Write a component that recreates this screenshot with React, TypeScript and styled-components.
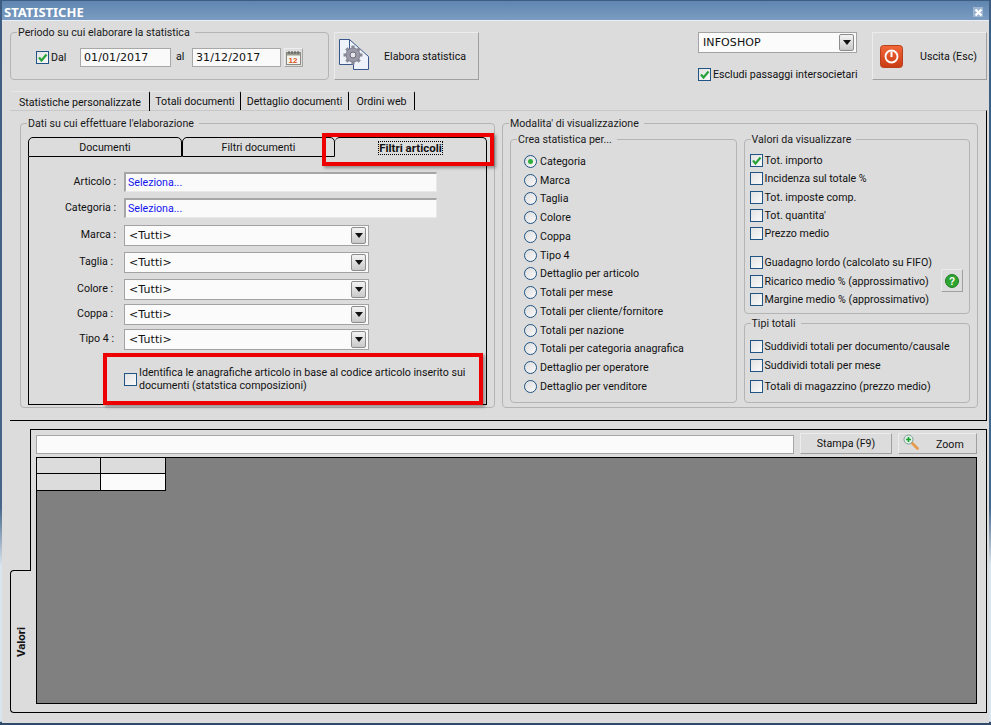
import React from 'react';
import styled, { createGlobalStyle } from 'styled-components';

const uiSize = '10.65px';

const Global = createGlobalStyle`
  html, body { margin: 0; padding: 0; background: #dcdcdc; }
  * { box-sizing: border-box; }
  body { font-family: Roboto, "Liberation Sans", sans-serif; font-size: ${uiSize}; color: #111; }
`;

const Frame = styled.div`
  position: relative;
  width: 991px;
  height: 725px;
  overflow: hidden;
  display: flex;
  flex-direction: column;
  background: #dcdcdc;
  border-style: solid;
  border-width: 1px 2px 2px 2px;
  border-image: linear-gradient(#3d5c82 0, #456689 70%, #d8e4ee 78%, #d8e4ee 99.5%, #2f4a6b 99.6%) 2;
`;

const TitleBar = styled.div`
  height: 20px;
  flex: none;
  display: flex;
  align-items: center;
  justify-content: space-between;
  padding: 3px 6px 0 2px;
  background: linear-gradient(#5f86b0, #7b9cc2);
  border-bottom: 1px solid #e8eef4;
`;

const Title = styled.span`
  color: #fff;
  font-family: "Noto Sans", sans-serif;
  font-weight: 700;
  font-size: 13px;
`;

const CloseBox = styled.span`
  width: 10px;
  height: 10px;
  display: flex;
  align-items: center;
  justify-content: center;
  background: #9db5d1;
`;

const TopBar = styled.div`
  height: 70px;
  flex: none;
  display: flex;
  padding: 11px 2px 0 8px;
`;

const Group = styled.fieldset<{ $w?: number; $h?: number }>`
  margin: -6px 0 0 0;
  min-width: 0;
  padding: 0;
  border: 1px solid #b4b4b4;
  border-radius: 4px;
  ${p => (p.$w ? `width: ${p.$w}px;` : '')}
  ${p => (p.$h ? `height: ${p.$h}px;` : '')}
`;

const GroupTitle = styled.legend`
  margin-left: 6px;
  padding: 1px 5px 0 1px;
  line-height: 12px;
  color: #1a1a1a;
`;

const PeriodRow = styled.div`
  display: flex;
  align-items: center;
  padding: 9px 0 0 25px;
`;

const Check = styled.span`
  flex: none;
  width: 13px;
  height: 13px;
  display: inline-flex;
  align-items: center;
  justify-content: center;
  border: 1px solid #1f5484;
  background: linear-gradient(135deg, #e2e2e2, #fafafa);
`;

const DateInput = styled.div<{ $w: number }>`
  width: ${p => p.$w}px;
  height: 19px;
  padding-left: 3px;
  display: flex;
  align-items: center;
  background: #fafafa;
  border: 1px solid #a8a8a8;
  font-family: "DejaVu Sans", sans-serif;
  font-size: 11px;
  letter-spacing: 0.1px;
`;

const DalLabel = styled.span`
  width: 31px;
  padding-left: 2px;
`;

const AlLabel = styled.span`
  width: 21px;
  padding-left: 5px;
  margin-top: -2px;
`;

const CalendarBtn = styled.span`
  width: 19px;
  height: 19px;
  margin-left: 3px;
  display: flex;
  align-items: center;
  justify-content: center;
  background: #dedede;
  border: 1px solid;
  border-color: #eee #a5a5a5 #a5a5a5 #eee;
`;

const BigButton = styled.div<{ $w: number; $ml?: number }>`
  flex: none;
  width: ${p => p.$w}px;
  height: 48px;
  margin-left: ${p => p.$ml ?? 0}px;
  display: flex;
  align-items: center;
  background: #dcdcdc;
  border: 1px solid;
  border-color: #ececec #a0a0a0 #a0a0a0 #ececec;
  padding-left: 3px;
`;

const BigButtonText = styled.span<{ $ml: number }>`
  margin: 1px 0 0 ${p => p.$ml}px;
`;

const PowerWrap = styled.span`
  display: flex;
  margin-left: 4px;
`;

const TopRightCol = styled.div`
  width: 174px;
  display: flex;
  flex-direction: column;
  margin-left: auto;
  gap: 15px;
`;

const Combo = styled.div<{ $w: number }>`
  width: ${p => p.$w}px;
  height: 21px;
  flex: none;
  display: flex;
  align-items: center;
  justify-content: space-between;
  padding: 0 2px 0 4px;
  background: #fbfbfb;
  border: 1px solid #a3a3a3;
  font-family: "DejaVu Sans", sans-serif;
  font-size: 11px;
  letter-spacing: 0.1px;
`;

const ComboBtn = styled.span`
  width: 15px;
  height: 17px;
  display: flex;
  align-items: center;
  justify-content: center;
  border-radius: 2px;
  border: 1px solid #8c8c8c;
  background: linear-gradient(#f4f4f4, #c9c9c9);
`;

const CheckRow = styled.label<{ $mt?: number }>`
  display: flex;
  align-items: center;
  gap: 2px;
  height: 13px;
  ${p => (p.$mt ? `margin-top: ${p.$mt}px;` : '')}
  white-space: nowrap;
`;

const TabStrip = styled.div`
  height: 19px;
  flex: none;
  display: flex;
  align-items: stretch;
  padding-left: 9px;
`;

const Tab = styled.div<{ $w: number; $on?: boolean }>`
  width: ${p => p.$w}px;
  display: flex;
  align-items: center;
  justify-content: center;
  padding-top: 1px;
  border-right: 1px solid #000;
  border-top: 1px solid #e6e6e6;
  border-top-right-radius: 2px;
  ${p => (p.$on ? 'height: 20px; position: relative; z-index: 1;' : '')}
`;

const TabBody = styled.div`
  height: 311px;
  flex: none;
  display: flex;
  gap: 7px;
  margin: 0 2px 0 8px;
  padding: 12px 8px 0 10px;
  border-top: 1px solid #c8c8c8;
  border-right: 1px solid #000;
  border-bottom: 1px solid #000;
`;

const FilterTabs = styled.div`
  display: flex;
  height: 20px;
  margin: 7px 7px 0 7px;
`;

const FilterTab = styled.div<{ $w: number; $on?: boolean }>`
  width: ${p => p.$w}px;
  display: flex;
  align-items: center;
  justify-content: center;
  border: 1px solid #000;
  border-left-width: ${p => (p.$on ? 0 : 1)}px;
  border-bottom: ${p => (p.$on ? 'none' : '1px solid #000')};
  border-radius: 5px 5px 0 0;
  font-size: ${p => (p.$on ? '11.5px' : uiSize)};
  font-weight: ${p => (p.$on ? 700 : 400)};
  & > span { ${p => (p.$on ? 'outline: 1px dotted #000; line-height: 12px;' : '')} }
`;

const FilterBody = styled.div`
  height: 248px;
  margin: 0 7px;
  padding-top: 15px;
  border: 1px solid #000;
  border-top: none;
`;

const FieldRow = styled.div<{ $mb: number }>`
  display: flex;
  align-items: center;
  margin-bottom: ${p => p.$mb}px;
`;

const FieldLabel = styled.span<{ $pr?: number }>`
  width: 95px;
  padding-right: ${p => p.$pr ?? 8}px;
  text-align: right;
  margin-top: -2px;
`;

const PickInput = styled.div`
  width: 313px;
  height: 20px;
  padding-left: 2px;
  display: flex;
  align-items: center;
  background: #fafafa;
  border: 1px solid #e8e8e8;
  border-top: 2px solid #a6a6a6;
  border-left: 2px solid #a6a6a6;
  color: #1414ee;
`;

const IdentRow = styled.div`
  display: flex;
  align-items: center;
  gap: 2px;
  margin: 16px 0 0 95px;
`;

const IdentText = styled.span`
  width: 340px;
  line-height: 13px;
`;

const ModeCols = styled.div`
  display: flex;
  gap: 7px;
  padding: 9px 7px 0;
`;

const RadioList = styled.div`
  display: flex;
  flex-direction: column;
  padding: 6px 0 0 13px;
`;

const RadioRow = styled.div`
  display: flex;
  align-items: center;
  gap: 3px;
  height: 18.75px;
`;

const Radio = styled.span<{ $on?: boolean }>`
  flex: none;
  position: relative;
  width: 13px;
  height: 13px;
  border-radius: 50%;
  border: 1px solid #1f5484;
  background: linear-gradient(135deg, #dcdcdc, #fafafa);
  &::after {
    content: '';
    display: ${p => (p.$on ? 'block' : 'none')};
    position: absolute;
    left: 3px;
    top: 3px;
    width: 5px;
    height: 5px;
    border-radius: 50%;
    background: #2fae3c;
  }
`;

const RightCol = styled.div`
  width: 227px;
  display: flex;
  flex-direction: column;
  gap: 9px;
`;

const ChecksList = styled.div<{ $pt: number }>`
  padding: ${p => p.$pt}px 0 0 5px;
`;

const HelpRow = styled.div`
  position: relative;
`;

const HelpButton = styled.span`
  position: absolute;
  right: 6px;
  top: -6px;
  width: 22px;
  height: 23px;
  display: flex;
  align-items: center;
  justify-content: center;
  background: #dcdcdc;
  border: 1px solid;
  border-color: #ececec #a0a0a0 #a0a0a0 #ececec;
`;

const Lower = styled.div`
  flex: 1;
  display: flex;
  align-items: stretch;
  margin: 8px 2px 10px 8px;
`;

const SideTabSlot = styled.div`
  width: 21px;
  flex: none;
  display: flex;
  align-items: flex-end;
  margin-right: -1px;
`;

const SideTab = styled.div`
  position: relative;
  z-index: 1;
  width: 100%;
  height: 143px;
  display: flex;
  align-items: center;
  justify-content: center;
  background: #dcdcdc;
  border-top: 1px solid #000;
  border-left: 1px solid #000;
  border-bottom: 1px solid #000;
  border-top-left-radius: 4px;
  border-bottom-left-radius: 4px;
`;

const SideLabel = styled.span`
  transform: rotate(-90deg);
  font-weight: 700;
  font-size: 11.5px;
`;

const Panel = styled.div`
  flex: 1;
  display: flex;
  flex-direction: column;
  padding: 3px 9px 8px 5px;
  border: 1px solid #000;
  background: #dcdcdc;
`;

const PanelBar = styled.div`
  height: 24px;
  flex: none;
  display: flex;
  align-items: flex-start;
`;

const TitleField = styled.div`
  width: 758px;
  height: 19px;
  margin-top: 2px;
  background: #fbfbfb;
  border: 1px solid #a6a6a6;
`;

const SmallButton = styled.div<{ $w: number }>`
  width: ${p => p.$w}px;
  height: 21px;
  margin-left: 6px;
  display: flex;
  align-items: center;
  justify-content: center;
  background: #dcdcdc;
  border: 1px solid;
  border-color: #ececec #a0a0a0 #a0a0a0 #ececec;
`;

const ZoomButton = styled(SmallButton)`
  justify-content: flex-start;
  padding-left: 4px;
  & > svg { margin-top: -3px; }
`;

const ZoomText = styled.span`
  margin: 2px 0 0 17px;
`;

const Sheet = styled.div`
  flex: 1;
  background: #808080;
  border: 1px solid #000;
`;

const SheetGrid = styled.div`
  display: grid;
  grid-template-columns: 64px 64px;
  grid-template-rows: 16px 16px;
  width: 129px;
  border-right: 1px solid #000;
  border-bottom: 1px solid #000;
`;

const SheetCell = styled.div<{ $white?: boolean; $last?: boolean; $low?: boolean }>`
  background: ${p => (p.$white ? '#fbfbfb' : '#dcdcdc')};
  ${p => (p.$last ? '' : 'border-right: 1px solid #000;')}
  ${p => (p.$low ? '' : 'border-bottom: 1px solid #000;')}
`;

const RedBox = styled.div<{ $x: number; $y: number; $w: number; $h: number }>`
  position: absolute;
  left: ${p => p.$x}px;
  top: ${p => p.$y}px;
  width: ${p => p.$w}px;
  height: ${p => p.$h}px;
  border: 4px solid #ee0000;
  box-shadow: 2px 2px 3px rgba(0, 0, 0, 0.35);
`;

const Tick = () => (
  <svg width="11" height="11" viewBox="0 0 11 11">
    <path d="M2 5.5 L4.5 8.5 L9.5 2.5" fill="none" stroke="#27a33a" strokeWidth="2.2" />
  </svg>
);

const Arrow = () => (
  <svg width="8" height="5" viewBox="0 0 8 5">
    <path d="M0 0H8L4 5Z" fill="#111" />
  </svg>
);

const CalendarIcon = () => (
  <svg width="15" height="15" viewBox="0 0 15 15">
    <rect x="0.5" y="2.5" width="14" height="12" fill="#f6f6f0" stroke="#8a8a80" />
    <rect x="1" y="3" width="13" height="2.5" fill="#9a9a90" />
    <path d="M3 1V4M6 1V4M9 1V4M12 1V4" stroke="#555" />
    <text x="2.5" y="13" fontSize="8" fontWeight="700" fontFamily="Liberation Sans" fill="#e2561a">12</text>
  </svg>
);

const GearDocIcon = () => (
  <svg width="34" height="38" viewBox="0 0 34 38">
    <path d="M1.5 2.5H11.5L30.5 19.5V32.5H15.5V27.5H1.5Z" fill="#eef2f9" stroke="#39578c" />
    <path d="M11.5 2.5V12.5H22" fill="none" stroke="#39578c" />
    <g transform="translate(15 18)">
      <path d="M0-9.5V9.5M-9.5 0H9.5M-6.7-6.7L6.7 6.7M6.7-6.7L-6.7 6.7" stroke="#8b8b99" strokeWidth="3.2" />
      <circle r="7" fill="#9a9aa8" stroke="#80808e" />
      <circle r="3" fill="#e4e4ea" stroke="#6a6a78" />
    </g>
  </svg>
);

const PowerIcon = () => (
  <svg width="23" height="23" viewBox="0 0 23 23">
    <defs>
      <linearGradient id="pw" x1="0" y1="0" x2="0" y2="1">
        <stop offset="0" stopColor="#f2683a" />
        <stop offset="1" stopColor="#c93a12" />
      </linearGradient>
    </defs>
    <rect x="0.5" y="0.5" width="22" height="22" rx="3" fill="url(#pw)" stroke="#b8401c" />
    <circle cx="11.5" cy="11.5" r="6" fill="none" stroke="#fff" strokeWidth="1.8" />
    <path d="M11.5 6.5V12" stroke="#fff" strokeWidth="2" />
  </svg>
);

const HelpIcon = () => (
  <svg width="14" height="14" viewBox="0 0 14 14">
    <circle cx="7" cy="7" r="6.5" fill="#2fa52f" stroke="#1f7f24" />
    <text x="7" y="10.5" textAnchor="middle" fontSize="10" fontWeight="700" fontFamily="Liberation Sans" fill="#fff">?</text>
  </svg>
);

const ZoomIcon = () => (
  <svg width="16" height="16" viewBox="0 0 16 16">
    <path d="M9 9L14.5 14.5" stroke="#e89a4a" strokeWidth="2.6" strokeLinecap="round" />
    <circle cx="5.5" cy="5.5" r="4.5" fill="#dff0ea" stroke="#7ea08e" />
    <path d="M5.5 3V8M3 5.5H8" stroke="#17a02a" strokeWidth="1.6" />
  </svg>
);

const CloseIcon = () => (
  <svg width="9" height="9" viewBox="0 0 9 9">
    <path d="M1.5 1.5L7.5 7.5M7.5 1.5L1.5 7.5" stroke="#fff" strokeWidth="2.2" />
  </svg>
);

const Box = ({ on }: { on?: boolean }) => <Check>{on && <Tick />}</Check>;

const filterFields: [string, number, number][] = [
  ['Marca :', 6, 8],
  ['Taglia :', 6, 11],
  ['Colore :', 4, 11],
  ['Coppa :', 4, 11],
];

const radios = [
  'Categoria', 'Marca', 'Taglia', 'Colore', 'Coppa', 'Tipo 4', 'Dettaglio per articolo',
  'Totali per mese', 'Totali per cliente/fornitore', 'Totali per nazione',
  'Totali per categoria anagrafica', 'Dettaglio per operatore', 'Dettaglio per venditore',
];

const ComboBox = ({ text, w }: { text: string; w: number }) => (
  <Combo $w={w}>
    {text}
    <ComboBtn><Arrow /></ComboBtn>
  </Combo>
);

export default function App() {
  return (
    <Frame>
      <Global />
      <TitleBar>
        <Title>STATISTICHE</Title>
        <CloseBox><CloseIcon /></CloseBox>
      </TitleBar>

      <TopBar>
        <Group $w={319} $h={54}>
          <GroupTitle>Periodo su cui elaborare la statistica</GroupTitle>
          <PeriodRow>
            <Box on />
            <DalLabel>Dal</DalLabel>
            <DateInput $w={91}>01/01/2017</DateInput>
            <AlLabel>al</AlLabel>
            <DateInput $w={89}>31/12/2017</DateInput>
            <CalendarBtn><CalendarIcon /></CalendarBtn>
          </PeriodRow>
        </Group>
        <BigButton $w={145} $ml={5}>
          <GearDocIcon />
          <BigButtonText $ml={12}>Elabora statistica</BigButtonText>
        </BigButton>
        <TopRightCol>
          <ComboBox text="INFOSHOP" w={159} />
          <CheckRow><Box on />Escludi passaggi intersocietari</CheckRow>
        </TopRightCol>
        <BigButton $w={115}>
          <PowerWrap><PowerIcon /></PowerWrap>
          <BigButtonText $ml={17}>Uscita (Esc)</BigButtonText>
        </BigButton>
      </TopBar>

      <TabStrip>
        <Tab $w={139} $on>Statistiche personalizzate</Tab>
        <Tab $w={91}>Totali documenti</Tab>
        <Tab $w={108}>Dettaglio documenti</Tab>
        <Tab $w={66}>Ordini web</Tab>
      </TabStrip>

      <TabBody>
        <Group $w={475} $h={291}>
          <GroupTitle>Dati su cui effettuare l'elaborazione</GroupTitle>
          <FilterTabs>
            <FilterTab $w={154}><span>Documenti</span></FilterTab>
            <FilterTab $w={153}><span>Filtri documenti</span></FilterTab>
            <FilterTab $w={152} $on><span>Filtri articoli</span></FilterTab>
          </FilterTabs>
          <FilterBody>
            <FieldRow $mb={6}><FieldLabel>Articolo :</FieldLabel><PickInput>Seleziona...</PickInput></FieldRow>
            <FieldRow $mb={7}><FieldLabel>Categoria :</FieldLabel><PickInput>Seleziona...</PickInput></FieldRow>
            {filterFields.map(([label, mb, pr]) => (
              <FieldRow key={label} $mb={mb}>
                <FieldLabel $pr={pr}>{label}</FieldLabel>
                <ComboBox text="<Tutti>" w={245} />
              </FieldRow>
            ))}
            <FieldRow $mb={0}>
              <FieldLabel $pr={10}>Tipo 4 :</FieldLabel>
              <ComboBox text="<Tutti>" w={245} />
            </FieldRow>
            <IdentRow>
              <Box />
              <IdentText>Identifica le anagrafiche articolo in base al codice articolo inserito sui documenti (statstica composizioni)</IdentText>
            </IdentRow>
          </FilterBody>
        </Group>

        <Group $w={476} $h={291}>
          <GroupTitle>Modalita' di visualizzazione</GroupTitle>
          <ModeCols>
            <Group $w={227} $h={270}>
              <GroupTitle>Crea statistica per...</GroupTitle>
              <RadioList>
                {radios.map((r, i) => (
                  <RadioRow key={r}><Radio $on={i === 0} />{r}</RadioRow>
                ))}
              </RadioList>
            </Group>
            <RightCol>
              <Group $h={181}>
                <GroupTitle>Valori da visualizzare</GroupTitle>
                <ChecksList $pt={8}>
                  <CheckRow><Box on />Tot. importo</CheckRow>
                  <CheckRow $mt={5}><Box />Incidenza sul totale %</CheckRow>
                  <CheckRow $mt={6}><Box />Tot. imposte comp.</CheckRow>
                  <CheckRow $mt={5}><Box />Tot. quantita'</CheckRow>
                  <CheckRow $mt={5}><Box />Prezzo medio</CheckRow>
                  <CheckRow $mt={16}><Box />Guadagno lordo (calcolato su FIFO)</CheckRow>
                  <HelpRow>
                    <CheckRow $mt={6}><Box />Ricarico medio % (approssimativo)</CheckRow>
                    <HelpButton><HelpIcon /></HelpButton>
                  </HelpRow>
                  <CheckRow $mt={5}><Box />Margine medio % (approssimativo)</CheckRow>
                </ChecksList>
              </Group>
              <Group $h={86}>
                <GroupTitle>Tipi totali</GroupTitle>
                <ChecksList $pt={10}>
                  <CheckRow><Box />Suddividi totali per documento/causale</CheckRow>
                  <CheckRow $mt={6}><Box />Suddividi totali per mese</CheckRow>
                  <CheckRow $mt={8}><Box />Totali di magazzino (prezzo medio)</CheckRow>
                </ChecksList>
              </Group>
            </RightCol>
          </ModeCols>
        </Group>
      </TabBody>

      <Lower>
        <SideTabSlot>
          <SideTab><SideLabel>Valori</SideLabel></SideTab>
        </SideTabSlot>
        <Panel>
          <PanelBar>
            <TitleField />
            <SmallButton $w={92}>Stampa (F9)</SmallButton>
            <ZoomButton $w={79}><ZoomIcon /><ZoomText>Zoom</ZoomText></ZoomButton>
          </PanelBar>
          <Sheet>
            <SheetGrid>
              <SheetCell />
              <SheetCell $last />
              <SheetCell $low />
              <SheetCell $white $last $low />
            </SheetGrid>
          </Sheet>
        </Panel>
      </Lower>

      <RedBox $x={320} $y={132} $w={172} $h={33} />
      <RedBox $x={101} $y={352} $w={380} $h={52} />
    </Frame>
  );
}
